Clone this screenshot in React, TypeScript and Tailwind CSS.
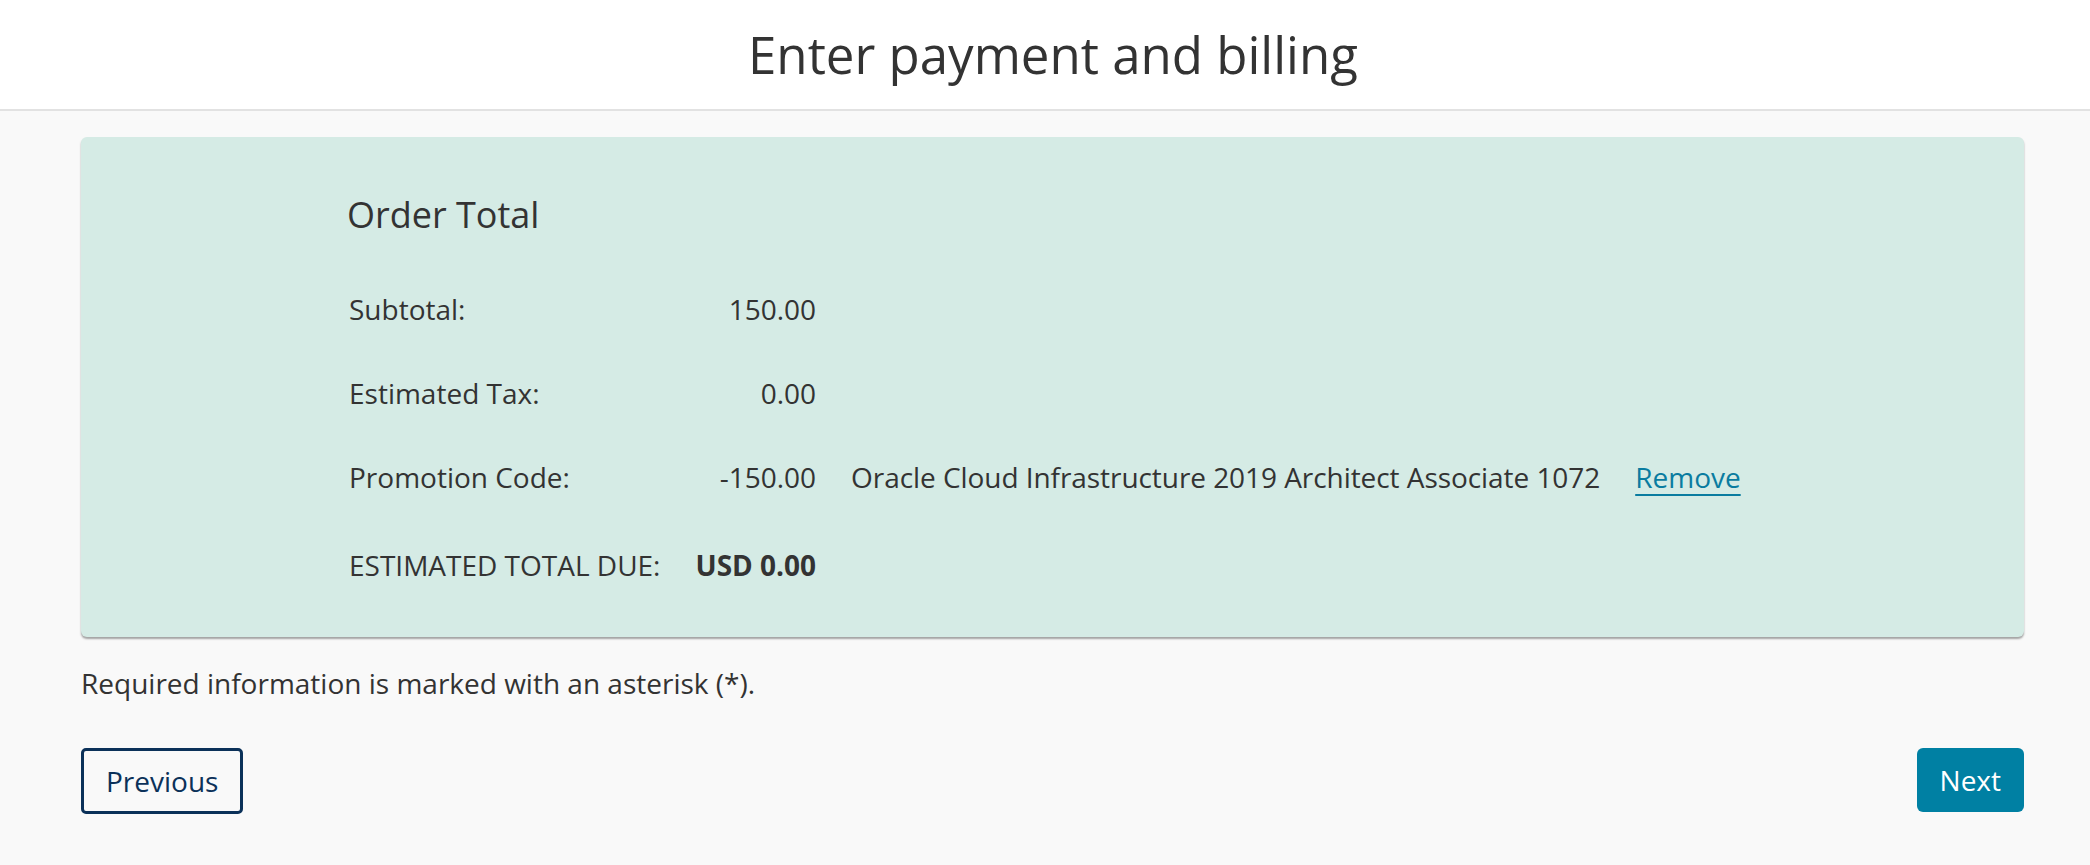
const rows = [
  { label: "Subtotal:", value: "150.00" },
  { label: "Estimated Tax:", value: "0.00" },
  {
    label: "Promotion Code:",
    value: "-150.00",
    note: "Oracle Cloud Infrastructure 2019 Architect Associate 1072",
    action: "Remove",
  },
  { label: "ESTIMATED TOTAL DUE:", value: "USD 0.00", bold: true },
];

export default function App() {
  return (
    <div className="min-h-screen bg-[#f9f9f9] text-[#333333] font-['Open_Sans',sans-serif]">
      <header className="bg-white border-b-2 border-[#e2e2e2] pt-[20px] pb-[21px] pl-[16px] text-center">
        <h1 className="text-[51px] leading-[68px] font-normal">Enter payment and billing</h1>
      </header>

      <main className="pl-[81px] pr-[66px] pt-[26px]">
        <section className="bg-[#d5ebe5] rounded-[6px] shadow-[0_2px_2px_rgba(0,0,0,0.35)] pl-[266px] pt-[53px] pb-[53px]">
          <h2 className="text-[36px] leading-[49px] font-normal">Order Total</h2>
          <div className="mt-[51px] grid grid-cols-[auto_auto_auto_auto] justify-start gap-x-[35px] text-[28px] leading-[38px]">
            {rows.map((r, i) => (
              <div key={r.label} className="contents">
                <div className={`pl-[2px] ${i === 0 ? "" : i === 3 ? "mt-[50px]" : "mt-[46px]"}`}>{r.label}</div>
                <div className={`text-right ${r.bold ? "font-bold" : ""} ${i === 0 ? "" : i === 3 ? "mt-[50px]" : "mt-[46px]"}`}>
                  {r.value}
                </div>
                <div className={`tracking-[-0.06px] ${i === 0 ? "" : i === 3 ? "mt-[50px]" : "mt-[46px]"}`}>{r.note ?? ""}</div>
                <div className={i === 0 ? "" : i === 3 ? "mt-[50px]" : "mt-[46px]"}>
                  {r.action && (
                    <a href="#" className="text-[#0a7ca0] underline decoration-2 underline-offset-[6px]">
                      {r.action}
                    </a>
                  )}
                </div>
              </div>
            ))}
          </div>
        </section>

        <p className="mt-[27px] text-[28px] leading-[38px]">
          Required information is marked with an asterisk (*).
        </p>

        <div className="mt-[46px] flex items-start justify-between">
          <button className="border-[3px] border-[#0b3159] rounded-[5px] px-[22px] py-[11px] text-[28px] leading-[38px] text-[#0b3159] bg-transparent">
            Previous
          </button>
          <button className="bg-[#0080a3] rounded-[6px] px-[23px] py-[13px] text-[28px] leading-[38px] text-white">
            Next
          </button>
        </div>
      </main>
    </div>
  );
}
